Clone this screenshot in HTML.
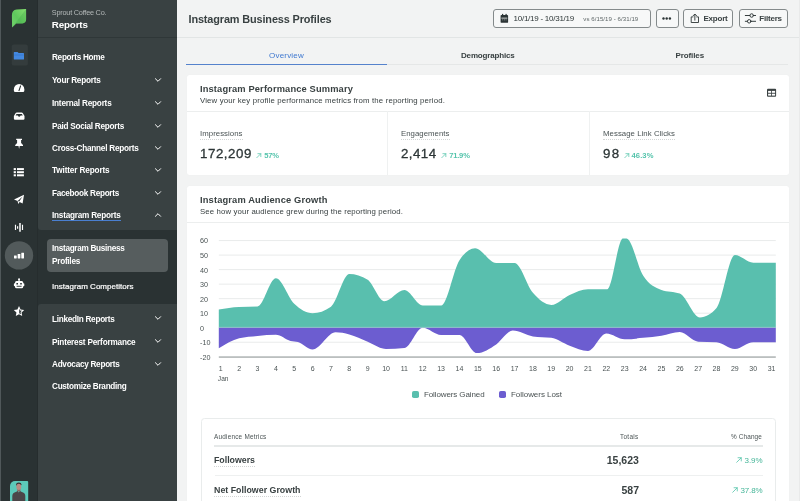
<!DOCTYPE html>
<html lang="en"><head><meta charset="utf-8"><title>Instagram Business Profiles</title>
<style>
html,body{margin:0;padding:0;}
body{width:800px;height:501px;overflow:hidden;background:#f2f3f3;position:relative;font-family:"Liberation Sans",sans-serif;}
.abs{position:absolute;}
.t{position:absolute;white-space:nowrap;margin:0;padding:0;font-weight:400;text-decoration:none;display:block;}
.layer{position:absolute;left:0;top:0;width:800px;height:501px;will-change:transform;}
.btn{position:absolute;box-sizing:border-box;border:1px solid #848a8b;border-radius:3px;background:#f7f8f8;top:9px;height:18.5px;}
.card{position:absolute;background:#fff;border-radius:2.5px;box-shadow:0 0 1px rgba(39,51,51,.06);}
.dot{position:absolute;height:0;border-top:1px dotted #d2d5d5;}
</style></head><body>
<aside id="rail" class="layer">
<div class="abs" style="left:0;top:0;width:38px;height:501px;background:#2a3233"></div>
<div class="abs" style="left:0;top:0;width:1.3px;height:501px;background:#50585a"></div>
<div class="abs" style="left:36.8px;top:0;width:1.2px;height:501px;background:#262d2e"></div>
<svg class="abs" style="left:0;top:0" width="38" height="501" viewBox="0 0 38 501">
  <defs>
    <linearGradient id="lg" x1="0" y1="1" x2="1" y2="0">
      <stop offset="0" stop-color="#74d36e"/>
      <stop offset="0.45" stop-color="#5fc85d"/>
      <stop offset="1" stop-color="#86e070"/>
    </linearGradient>
  </defs>
  <!-- logo leaf -->
  <path d="M12.1,27.5 L11.9,15.4 C11.9,11.6 13.4,9.6 16.6,9.4 L26.1,8.9 L26.1,19.6 C26.1,22 24.8,23.4 22.4,23.5 L16.2,23.6 Z" fill="url(#lg)"/>
  <path d="M12.1,27.5 L26.1,8.9 L26.1,19.6 C26.1,22 24.8,23.4 22.4,23.5 L16.2,23.6 Z" fill="#3fa648" opacity="0.3"/>
  <!-- folder button -->
  <rect x="11.7" y="44.4" width="16.2" height="21.2" rx="2.2" fill="#343c3d"/>
  <path d="M13.8,52.6 a0.6,0.6 0 0 1 0.6,-0.6 h3.2 l1,1.1 h4.8 a0.6,0.6 0 0 1 0.6,0.6 v5.2 a0.6,0.6 0 0 1 -0.6,0.6 h-9 a0.6,0.6 0 0 1 -0.6,-0.6 Z" fill="#4489e0"/>
  <rect x="14.2" y="54.6" width="9.4" height="0.8" fill="#2f6fc8" opacity="0.7"/>
  <!-- gauge -->
  <path d="M15.2,92.1 a1.3,1.3 0 0 1 -1.3,-1.3 v-1.6 a5.2,5.2 0 0 1 10.4,0 v1.6 a1.3,1.3 0 0 1 -1.3,1.3 Z" fill="#fff"/>
  <path d="M20.6,85.9 L19,90.6" stroke="#2a3233" stroke-width="1.1" stroke-linecap="round" fill="none"/>
  <!-- inbox -->
  <path d="M15,119.8 a1.1,1.1 0 0 1 -1.1,-1.1 v-2.6 l1.8,-3.1 q0.4,-0.6 1.1,-0.6 h4.8 q0.7,0 1.1,0.6 l1.8,3.1 v2.6 a1.1,1.1 0 0 1 -1.1,1.1 Z" fill="#fff"/>
  <path d="M15.6,115.5 l0.9,-1.5 h5.4 l0.9,1.5 h-2.2 q-0.6,1.3 -1.4,1.3 q-0.8,0 -1.4,-1.3 Z" fill="#2a3233"/>
  <!-- pin -->
  <path d="M16.2,138.7 h5.8 v1.4 h-0.9 v3 l1.9,1.9 v1 h-3.3 l-0.6,3 l-0.6,-3 h-3.3 v-1 l1.9,-1.9 v-3 h-0.9 Z" fill="#fff"/>
  <!-- list -->
  <g fill="#fff">
    <rect x="13.7" y="168.1" width="2.2" height="2"/><rect x="17" y="168.1" width="6.9" height="2"/>
    <rect x="13.7" y="171.2" width="2.2" height="2"/><rect x="17" y="171.2" width="6.9" height="2"/>
    <rect x="13.7" y="174.3" width="2.2" height="2"/><rect x="17" y="174.3" width="6.9" height="2"/>
  </g>
  <!-- paper plane -->
  <path d="M14,199.6 L24,194.8 L22.6,203.4 L19.6,202 L18.2,203.9 L17.6,201.1 Z" fill="#fff"/>
  <path d="M17.7,201 L22.6,196.6 L19.2,201.6" fill="#2a3233"/>
  <!-- audio bars -->
  <g stroke="#fff" stroke-width="1.15" stroke-linecap="butt" fill="none">
    <path d="M15.5,224.8 v5.3 M17.6,226.2 v2.6 M22.5,224.8 v5.3"/><path d="M20,223.1 v8.7" stroke-width="1.5"/>
  </g>
  <!-- selected circle + bars -->
  <circle cx="19" cy="255.4" r="14.2" fill="#525a5b"/>
  <g fill="#fff">
    <rect x="14" y="255.4" width="2.7" height="3" rx="0.4"/>
    <rect x="17.65" y="254" width="2.7" height="4.4" rx="0.4"/>
    <rect x="21.3" y="252.7" width="2.7" height="5.7" rx="0.4"/>
  </g>
  <!-- robot -->
  <rect x="18.4" y="278.9" width="1.3" height="2.6" fill="#fff"/>
  <circle cx="19.05" cy="279.2" r="0.9" fill="#fff"/>
  <rect x="15" y="281.1" width="8.2" height="7.1" rx="1.5" fill="#fff"/>
  <rect x="13.9" y="283.2" width="10.4" height="3" rx="0.8" fill="#fff"/>
  <rect x="16.4" y="283" width="1.6" height="1.5" fill="#2a3233"/>
  <rect x="20.2" y="283" width="1.6" height="1.5" fill="#2a3233"/>
  <rect x="16.6" y="285.8" width="5" height="0.9" fill="#2a3233"/>
  <!-- star -->
  <path d="M19,306.1 L20.6,309.5 L24.2,309.95 L21.55,312.45 L22.2,316.1 L19,314.3 L15.8,316.1 L16.45,312.45 L13.8,309.95 L17.4,309.5 Z" fill="#fff"/>
  <path d="M19.2,308.6 L19.2,313.2 L20.9,314.2 L20.55,312.1 L22,310.75 L20.05,310.45 Z" fill="#2a3233"/>
  <!-- avatar -->
  <path d="M10,501 V486 a5,5 0 0 1 5,-5 H27.2 a1,1 0 0 1 1,1 V501 Z" fill="#5cc9b9"/>
  <ellipse cx="18.8" cy="484.4" rx="2.7" ry="1.9" fill="#3a3234"/>
  <ellipse cx="18.8" cy="486.9" rx="2.45" ry="3.1" fill="#b88c83"/>
  <path d="M17.2,489.2 q1.6,1.6 3.2,0 v2.2 h-3.2 Z" fill="#8f6a64"/>
  <path d="M12.3,501 V496 q0,-3.2 4,-4.3 l1.3,-0.6 l1.2,1.4 l1.2,-1.4 l1.3,0.6 q4,1.1 4,4.3 V501 Z" fill="#4b4648"/>
</svg>
</aside>
<nav id="sidenav" class="layer">
<div class="abs" style="left:38px;top:0;width:139px;height:501px;background:#2a3233"></div>
<div class="abs" style="left:38px;top:0;width:139px;height:229.5px;background:#394142;border-radius:0 0 0 3px"></div>
<div class="abs" style="left:38px;top:303.8px;width:139px;height:198px;background:#394142;border-radius:3px 0 0 0"></div>
<div class="abs" style="left:38px;top:37px;width:139px;height:1px;background:#2f3738"></div>
<div class="abs" style="left:47px;top:239.1px;width:120.6px;height:32.7px;background:#565d5e;border-radius:4px"></div>
<div class="abs" style="left:52px;top:220.2px;width:68.5px;height:1px;background:#4a7fd0"></div>
<svg class="abs" style="left:152px;top:74.6px" width="12" height="10" viewBox="-6 -5 12 10"><path d="M-2.6,-1.3L0,1.3L2.6,-1.3" fill="none" stroke="#fff" stroke-width="1.0" stroke-linecap="round" stroke-linejoin="round"/></svg>
<svg class="abs" style="left:152px;top:97.6px" width="12" height="10" viewBox="-6 -5 12 10"><path d="M-2.6,-1.3L0,1.3L2.6,-1.3" fill="none" stroke="#fff" stroke-width="1.0" stroke-linecap="round" stroke-linejoin="round"/></svg>
<svg class="abs" style="left:152px;top:120.6px" width="12" height="10" viewBox="-6 -5 12 10"><path d="M-2.6,-1.3L0,1.3L2.6,-1.3" fill="none" stroke="#fff" stroke-width="1.0" stroke-linecap="round" stroke-linejoin="round"/></svg>
<svg class="abs" style="left:152px;top:143px" width="12" height="10" viewBox="-6 -5 12 10"><path d="M-2.6,-1.3L0,1.3L2.6,-1.3" fill="none" stroke="#fff" stroke-width="1.0" stroke-linecap="round" stroke-linejoin="round"/></svg>
<svg class="abs" style="left:152px;top:165.1px" width="12" height="10" viewBox="-6 -5 12 10"><path d="M-2.6,-1.3L0,1.3L2.6,-1.3" fill="none" stroke="#fff" stroke-width="1.0" stroke-linecap="round" stroke-linejoin="round"/></svg>
<svg class="abs" style="left:152px;top:187.6px" width="12" height="10" viewBox="-6 -5 12 10"><path d="M-2.6,-1.3L0,1.3L2.6,-1.3" fill="none" stroke="#fff" stroke-width="1.0" stroke-linecap="round" stroke-linejoin="round"/></svg>
<svg class="abs" style="left:152px;top:209.8px" width="12" height="10" viewBox="-6 -5 12 10"><path d="M-2.6,1.3L0,-1.3L2.6,1.3" fill="none" stroke="#fff" stroke-width="1.0" stroke-linecap="round" stroke-linejoin="round"/></svg>
<svg class="abs" style="left:152px;top:313.3px" width="12" height="10" viewBox="-6 -5 12 10"><path d="M-2.6,-1.3L0,1.3L2.6,-1.3" fill="none" stroke="#fff" stroke-width="1.0" stroke-linecap="round" stroke-linejoin="round"/></svg>
<svg class="abs" style="left:152px;top:336px" width="12" height="10" viewBox="-6 -5 12 10"><path d="M-2.6,-1.3L0,1.3L2.6,-1.3" fill="none" stroke="#fff" stroke-width="1.0" stroke-linecap="round" stroke-linejoin="round"/></svg>
<svg class="abs" style="left:152px;top:358.6px" width="12" height="10" viewBox="-6 -5 12 10"><path d="M-2.6,-1.3L0,1.3L2.6,-1.3" fill="none" stroke="#fff" stroke-width="1.0" stroke-linecap="round" stroke-linejoin="round"/></svg>
<span class="t" id="co" style="left:51.8px;top:7px;font-size:7.3px;line-height:11px;color:#b4b9b9;letter-spacing:-0.222px;">Sprout Coffee Co.</span>
<span class="t" id="rep" style="left:51.8px;top:18px;font-size:9.8px;line-height:14px;color:#ffffff;font-weight:700;letter-spacing:-0.147px;">Reports</span>
<a class="t" id="nav0" style="left:52px;top:52px;font-size:8.2px;line-height:12px;color:#ffffff;font-weight:700;letter-spacing:-0.289px;">Reports Home</a>
<a class="t" id="nav1" style="left:52px;top:75px;font-size:8.2px;line-height:12px;color:#ffffff;font-weight:700;letter-spacing:-0.23px;">Your Reports</a>
<a class="t" id="nav2" style="left:52px;top:98px;font-size:8.2px;line-height:12px;color:#ffffff;font-weight:700;letter-spacing:-0.206px;">Internal Reports</a>
<a class="t" id="nav3" style="left:52px;top:121px;font-size:8.2px;line-height:12px;color:#ffffff;font-weight:700;letter-spacing:-0.258px;">Paid Social Reports</a>
<a class="t" id="nav4" style="left:52px;top:143px;font-size:8.2px;line-height:12px;color:#ffffff;font-weight:700;letter-spacing:-0.236px;">Cross-Channel Reports</a>
<a class="t" id="nav5" style="left:52px;top:165px;font-size:8.2px;line-height:12px;color:#ffffff;font-weight:700;letter-spacing:-0.13px;">Twitter Reports</a>
<a class="t" id="nav6" style="left:52px;top:188px;font-size:8.2px;line-height:12px;color:#ffffff;font-weight:700;letter-spacing:-0.277px;">Facebook Reports</a>
<a class="t" id="nav7" style="left:52px;top:210px;font-size:8.2px;line-height:12px;color:#ffffff;font-weight:700;letter-spacing:-0.226px;">Instagram Reports</a>
<a class="t" id="nav8" style="left:52px;top:243px;font-size:8.2px;line-height:12px;color:#ffffff;font-weight:700;letter-spacing:-0.295px;">Instagram Business</a>
<a class="t" id="nav9" style="left:52px;top:256px;font-size:8.2px;line-height:12px;color:#ffffff;font-weight:700;letter-spacing:-0.256px;">Profiles</a>
<a class="t" id="nav10" style="left:52px;top:314px;font-size:8.2px;line-height:12px;color:#ffffff;font-weight:700;letter-spacing:-0.273px;">LinkedIn Reports</a>
<a class="t" id="nav11" style="left:52px;top:337px;font-size:8.2px;line-height:12px;color:#ffffff;font-weight:700;letter-spacing:-0.185px;">Pinterest Performance</a>
<a class="t" id="nav12" style="left:52px;top:359px;font-size:8.2px;line-height:12px;color:#ffffff;font-weight:700;letter-spacing:-0.275px;">Advocacy Reports</a>
<a class="t" id="nav13" style="left:52px;top:381px;font-size:8.2px;line-height:12px;color:#ffffff;font-weight:700;letter-spacing:-0.284px;">Customize Branding</a>
<a class="t" id="navc" style="left:52px;top:281px;font-size:8.0px;line-height:12px;color:#ffffff;letter-spacing:0.028px;-webkit-text-stroke:0.2px #fff;">Instagram Competitors</a>
</nav>
<header id="topbar" class="layer">
<div class="abs" style="left:177px;top:37px;width:623px;height:1px;background:#e2e5e5"></div>
<div class="abs" style="left:799px;top:0;width:1px;height:501px;background:#e9eaea"></div>
<div class="btn" style="left:493.3px;width:157.6px"></div>
<div class="btn" style="left:655.5px;width:23px"></div>
<div class="btn" style="left:683.2px;width:49.5px"></div>
<div class="btn" style="left:739px;width:48.6px"></div>
<svg class="abs" style="left:490px;top:5px" width="310" height="28" viewBox="490 5 310 28">
  <!-- calendar -->
  <rect x="500.6" y="14.9" width="7.5" height="7.9" rx="0.9" fill="#2c3536"/>
  <rect x="502" y="13.9" width="1.2" height="2.2" fill="#2c3536"/>
  <rect x="505.5" y="13.9" width="1.2" height="2.2" fill="#2c3536"/>
  <rect x="501.4" y="17.7" width="5.9" height="0.8" fill="#f7f8f8"/>
  <g fill="#f7f8f8" opacity="0.55"><rect x="502.2" y="19.4" width="1" height="0.9"/><rect x="503.9" y="19.4" width="1" height="0.9"/><rect x="505.6" y="19.4" width="1" height="0.9"/></g>
  <!-- dots -->
  <circle cx="663.5" cy="18.5" r="1.2" fill="#2c3536"/>
  <circle cx="666.7" cy="18.5" r="1.2" fill="#2c3536"/>
  <circle cx="669.9" cy="18.5" r="1.2" fill="#2c3536"/>
  <!-- export/share -->
  <path d="M693,16.9 h-1.8 v5.6 h7.3 v-5.6 h-1.8 M694.85,20.2 v-5.8 M693.1,15.8 l1.75,-1.8 l1.75,1.8" fill="none" stroke="#2c3536" stroke-width="0.9" stroke-linejoin="round" stroke-linecap="round"/>
  <!-- filters sliders -->
  <g fill="none" stroke="#2c3536" stroke-width="0.95" stroke-linecap="round">
    <path d="M745.3,15.5 h4.5 M753.6,15.5 h2"/>
    <circle cx="751.7" cy="15.5" r="1.75"/>
    <path d="M745.3,21.3 h2 M751.1,21.3 h4.5"/>
    <circle cx="749.2" cy="21.3" r="1.75"/>
  </g>
</svg>
<h1 class="t" id="title" style="left:188.5px;top:12px;font-size:10.9px;line-height:15px;color:#394142;font-weight:700;letter-spacing:-0.129px;">Instagram Business Profiles</h1>
<span class="t" id="date" style="left:513.5px;top:13px;font-size:8.0px;line-height:12px;color:#2c3536;letter-spacing:-0.247px;">10/1/19 - 10/31/19</span>
<span class="t" id="vs" style="left:583.3px;top:14px;font-size:6.1px;line-height:9px;color:#5f6768;letter-spacing:0.056px;">vs 6/15/19 - 6/31/19</span>
<span class="t" id="export" style="left:703.5px;top:13px;font-size:8.0px;line-height:12px;color:#394142;font-weight:700;letter-spacing:-0.224px;">Export</span>
<span class="t" id="filters" style="left:759.3px;top:13px;font-size:8.0px;line-height:12px;color:#394142;font-weight:700;letter-spacing:-0.217px;">Filters</span>
</header>
<main id="content" class="layer">
<div id="tabs">
<div class="abs" style="left:387px;top:64.1px;width:401px;height:1px;background:#e5e7e7"></div>
<div class="abs" style="left:186px;top:63.5px;width:201px;height:1.4px;background:#5582cc"></div>
<span class="t" id="tab1" style="left:269px;top:50px;font-size:8.0px;line-height:12px;color:#3f78d0;letter-spacing:0.207px;">Overview</span>
<span class="t" id="tab2" style="left:461px;top:50px;font-size:8.0px;line-height:12px;color:#394142;font-weight:700;letter-spacing:-0.173px;">Demographics</span>
<span class="t" id="tab3" style="left:675.5px;top:50px;font-size:8.0px;line-height:12px;color:#394142;font-weight:700;letter-spacing:-0.105px;">Profiles</span>
</div>
<section id="summary">
<div class="card" style="left:186.8px;top:74.5px;width:602px;height:100.5px"></div>
<div class="abs" style="left:187px;top:110.8px;width:601.7px;height:1px;background:#eceeee"></div>
<div class="abs" style="left:387px;top:111px;width:1px;height:64px;background:#eff1f1"></div>
<div class="abs" style="left:588.5px;top:111px;width:1px;height:64px;background:#eff1f1"></div>
<svg class="abs" style="left:764px;top:86px" width="16" height="14" viewBox="764 86 16 14">
  <rect x="767" y="88.8" width="9.1" height="8" rx="1" fill="#3a4142"/>
  <rect x="768.1" y="90.9" width="3.1" height="1.9" fill="#fff"/>
  <rect x="772" y="90.9" width="3.1" height="1.9" fill="#fff"/>
  <rect x="768.1" y="93.7" width="3.1" height="1.9" fill="#fff"/>
  <rect x="772" y="93.7" width="3.1" height="1.9" fill="#fff"/>
</svg>
<div class="dot" style="left:200px;top:139.2px;width:42.5px"></div>
<div class="dot" style="left:401px;top:139.2px;width:48.5px"></div>
<div class="dot" style="left:603px;top:139.2px;width:72px"></div>
<svg class="abs" style="left:256.3px;top:152.7px" width="5.5" height="5.5" viewBox="0 0 10 10"><path d="M1.2,8.8L8.6,1.4M3.4,1.2H8.8V6.6" fill="none" stroke="#4fc3a8" stroke-width="1.3" stroke-linecap="round" stroke-linejoin="round"/></svg>
<svg class="abs" style="left:441.3px;top:152.7px" width="5.5" height="5.5" viewBox="0 0 10 10"><path d="M1.2,8.8L8.6,1.4M3.4,1.2H8.8V6.6" fill="none" stroke="#4fc3a8" stroke-width="1.3" stroke-linecap="round" stroke-linejoin="round"/></svg>
<svg class="abs" style="left:624px;top:152.7px" width="5.5" height="5.5" viewBox="0 0 10 10"><path d="M1.2,8.8L8.6,1.4M3.4,1.2H8.8V6.6" fill="none" stroke="#4fc3a8" stroke-width="1.3" stroke-linecap="round" stroke-linejoin="round"/></svg>
<h2 class="t" id="c1t" style="left:200px;top:83px;font-size:9.3px;line-height:13px;color:#394142;font-weight:700;letter-spacing:0.144px;">Instagram Performance Summary</h2>
<span class="t" id="c1s" style="left:200px;top:95px;font-size:7.8px;line-height:11px;color:#394142;letter-spacing:0.151px;">View your key profile performance metrics from the reporting period.</span>
<span class="t" id="m1l" style="left:200px;top:128px;font-size:7.8px;line-height:11px;color:#4a5354;letter-spacing:0.043px;">Impressions</span>
<span class="t" id="m1v" style="left:200px;top:145px;font-size:13.3px;line-height:18px;color:#2c3536;letter-spacing:0.56px;-webkit-text-stroke:0.3px #2c3536;">172,209</span>
<span class="t" id="m1c" style="left:264.2px;top:150px;font-size:7.6px;line-height:11px;color:#55c4ac;font-weight:700;letter-spacing:-0.234px;">57%</span>
<span class="t" id="m2l" style="left:401px;top:128px;font-size:7.8px;line-height:11px;color:#4a5354;letter-spacing:0.034px;">Engagements</span>
<span class="t" id="m2v" style="left:401px;top:145px;font-size:13.3px;line-height:18px;color:#2c3536;letter-spacing:0.444px;-webkit-text-stroke:0.3px #2c3536;">2,414</span>
<span class="t" id="m2c" style="left:449.2px;top:150px;font-size:7.6px;line-height:11px;color:#55c4ac;font-weight:700;letter-spacing:-0.209px;">71.9%</span>
<span class="t" id="m3l" style="left:603px;top:128px;font-size:7.8px;line-height:11px;color:#4a5354;letter-spacing:0.049px;">Message Link Clicks</span>
<span class="t" id="m3v" style="left:603px;top:145px;font-size:13.3px;line-height:18px;color:#2c3536;letter-spacing:1.352px;-webkit-text-stroke:0.3px #2c3536;">98</span>
<span class="t" id="m3c" style="left:631.5px;top:150px;font-size:7.6px;line-height:11px;color:#55c4ac;font-weight:700;letter-spacing:0.091px;">46.3%</span>
</section>
<section id="growth">
<div class="card" style="left:186.8px;top:186.3px;width:602px;height:330px"></div>
<div class="abs" style="left:187px;top:222px;width:601.7px;height:1px;background:#eceeee"></div>
<h2 class="t" id="c2t" style="left:200px;top:194px;font-size:9.3px;line-height:13px;color:#394142;font-weight:700;letter-spacing:0.154px;">Instagram Audience Growth</h2>
<span class="t" id="c2s" style="left:200px;top:206px;font-size:7.8px;line-height:11px;color:#394142;letter-spacing:0.121px;">See how your audience grew during the reporting period.</span>
<div id="chart">
<svg class="abs" style="left:0;top:0" width="800" height="501" viewBox="0 0 800 501">
<rect x="218.8" y="240.08" width="557.0" height="1" fill="#e9ebeb"/>
<rect x="218.8" y="254.60" width="557.0" height="1" fill="#e9ebeb"/>
<rect x="218.8" y="269.12" width="557.0" height="1" fill="#e9ebeb"/>
<rect x="218.8" y="283.64" width="557.0" height="1" fill="#e9ebeb"/>
<rect x="218.8" y="298.16" width="557.0" height="1" fill="#e9ebeb"/>
<rect x="218.8" y="312.68" width="557.0" height="1" fill="#e9ebeb"/>
<rect x="218.8" y="327.20" width="557.0" height="1" fill="#e9ebeb"/>
<rect x="218.8" y="341.72" width="557.0" height="1" fill="#e9ebeb"/>
<path d="M218.8,327.7L218.80,309.40C225.59,308.33 232.37,307.26 239.16,306.94C245.28,306.65 251.40,306.79 257.52,306.50C263.64,306.21 269.76,278.33 275.88,278.33C282.00,278.33 288.12,297.93 294.24,303.74C300.36,309.55 306.48,313.18 312.60,313.18C318.72,313.18 324.84,311.00 330.96,306.65C337.08,302.29 343.20,273.98 349.32,273.98C355.44,273.98 361.56,275.91 367.68,279.78C373.19,283.27 378.70,301.13 384.20,301.13C390.94,301.13 397.67,289.95 404.40,289.95C410.52,289.95 416.64,305.48 422.76,305.48C428.88,305.48 435.00,305.48 441.12,305.48C447.24,305.48 453.36,269.63 459.48,260.18C464.68,252.15 469.88,248.13 475.09,248.13C482.12,248.13 489.16,263.09 496.20,263.09C502.32,263.09 508.44,263.09 514.56,263.09C520.68,263.09 526.80,285.88 532.92,292.85C539.04,299.82 545.16,304.90 551.28,304.90C557.40,304.90 563.52,297.50 569.64,294.88C575.76,292.27 581.88,289.22 588.00,289.22C594.43,289.22 600.85,289.22 607.28,289.22C612.48,289.22 617.68,238.40 622.88,238.40C624.11,238.40 625.33,238.40 626.56,238.40C632.06,238.40 637.57,266.87 643.08,275.43C649.20,284.94 655.32,287.53 661.44,289.95C667.56,292.37 673.68,291.16 679.80,293.58C686.53,296.24 693.26,317.54 700.00,317.54C705.50,317.54 711.01,314.39 716.52,308.10C722.64,301.11 728.76,255.10 734.88,255.10C741.00,255.10 747.12,262.80 753.24,262.80C760.76,262.80 768.28,262.80 775.80,262.80L775.8,327.7Z" fill="#59bfae"/>
<path d="M218.8,327.7L218.80,348.32C225.59,344.17 232.37,340.02 239.16,338.30C245.28,336.75 251.40,336.56 257.52,335.98C263.64,335.40 269.76,334.81 275.88,334.81C280.78,334.81 285.67,339.72 290.57,340.91C293.02,341.51 295.46,341.41 297.91,342.07C302.81,343.41 307.70,349.48 312.60,349.48C320.25,349.48 327.90,332.35 335.55,332.35C340.14,332.35 344.73,333.21 349.32,334.38C355.44,335.93 361.56,339.22 367.68,341.64C373.80,344.06 379.92,348.90 386.04,348.90C392.16,348.90 398.28,348.61 404.40,348.03C410.52,347.45 416.64,327.70 422.76,327.70C428.88,327.70 435.00,334.96 441.12,334.96C447.24,334.96 453.36,334.96 459.48,334.96C465.29,334.96 471.11,353.11 476.92,353.11C483.35,353.11 489.77,348.63 496.20,344.40C501.71,340.77 507.22,330.60 512.72,330.60C519.46,330.60 526.19,335.35 532.92,336.41C539.04,337.38 545.16,336.90 551.28,337.86C557.40,338.83 563.52,343.53 569.64,345.70C575.76,347.88 581.88,350.93 588.00,350.93C594.12,350.93 600.24,333.51 606.36,333.51C612.48,333.51 618.60,339.32 624.72,339.32C630.84,339.32 636.96,338.47 643.08,337.86C649.20,337.26 655.32,336.65 661.44,335.69C667.56,334.72 673.68,332.06 679.80,332.06C685.92,332.06 692.04,341.25 698.16,341.64C704.28,342.03 710.40,341.83 716.52,342.22C722.64,342.61 728.76,348.90 734.88,348.90C741.00,348.90 747.12,342.22 753.24,342.22C760.76,342.22 768.28,342.22 775.80,342.22L775.8,327.7Z" fill="#6c5dd0"/>
<rect x="218.8" y="326.80" width="557.0" height="0.9" fill="#ffffff" opacity="0.22"/>
<rect x="218.8" y="356.19" width="557.0" height="1.8" fill="#bbbfbf"/>
</svg>
<span class="t" id="y60" style="left:200px;top:235px;font-size:7.2px;line-height:11px;color:#4a5354;">60</span>
<span class="t" id="y50" style="left:200px;top:250px;font-size:7.2px;line-height:11px;color:#4a5354;">50</span>
<span class="t" id="y40" style="left:200px;top:265px;font-size:7.2px;line-height:11px;color:#4a5354;">40</span>
<span class="t" id="y30" style="left:200px;top:279px;font-size:7.2px;line-height:11px;color:#4a5354;">30</span>
<span class="t" id="y20" style="left:200px;top:294px;font-size:7.2px;line-height:11px;color:#4a5354;">20</span>
<span class="t" id="y10" style="left:200px;top:308px;font-size:7.2px;line-height:11px;color:#4a5354;">10</span>
<span class="t" id="y0" style="left:200px;top:323px;font-size:7.2px;line-height:11px;color:#4a5354;">0</span>
<span class="t" id="y-10" style="left:200px;top:337px;font-size:7.2px;line-height:11px;color:#4a5354;">-10</span>
<span class="t" id="y-20" style="left:200px;top:352px;font-size:7.2px;line-height:11px;color:#4a5354;">-20</span>
<span class="t" id="x1" style="left:220.8px;top:364px;font-size:7.0px;line-height:10px;color:#4a5354;transform:translateX(-50%);">1</span>
<span class="t" id="x2" style="left:239.16px;top:364px;font-size:7.0px;line-height:10px;color:#4a5354;transform:translateX(-50%);">2</span>
<span class="t" id="x3" style="left:257.52px;top:364px;font-size:7.0px;line-height:10px;color:#4a5354;transform:translateX(-50%);">3</span>
<span class="t" id="x4" style="left:275.88px;top:364px;font-size:7.0px;line-height:10px;color:#4a5354;transform:translateX(-50%);">4</span>
<span class="t" id="x5" style="left:294.24px;top:364px;font-size:7.0px;line-height:10px;color:#4a5354;transform:translateX(-50%);">5</span>
<span class="t" id="x6" style="left:312.6px;top:364px;font-size:7.0px;line-height:10px;color:#4a5354;transform:translateX(-50%);">6</span>
<span class="t" id="x7" style="left:330.96px;top:364px;font-size:7.0px;line-height:10px;color:#4a5354;transform:translateX(-50%);">7</span>
<span class="t" id="x8" style="left:349.32px;top:364px;font-size:7.0px;line-height:10px;color:#4a5354;transform:translateX(-50%);">8</span>
<span class="t" id="x9" style="left:367.68px;top:364px;font-size:7.0px;line-height:10px;color:#4a5354;transform:translateX(-50%);">9</span>
<span class="t" id="x10" style="left:386.04px;top:364px;font-size:7.0px;line-height:10px;color:#4a5354;transform:translateX(-50%);">10</span>
<span class="t" id="x11" style="left:404.4px;top:364px;font-size:7.0px;line-height:10px;color:#4a5354;transform:translateX(-50%);">11</span>
<span class="t" id="x12" style="left:422.76px;top:364px;font-size:7.0px;line-height:10px;color:#4a5354;transform:translateX(-50%);">12</span>
<span class="t" id="x13" style="left:441.12px;top:364px;font-size:7.0px;line-height:10px;color:#4a5354;transform:translateX(-50%);">13</span>
<span class="t" id="x14" style="left:459.48px;top:364px;font-size:7.0px;line-height:10px;color:#4a5354;transform:translateX(-50%);">14</span>
<span class="t" id="x15" style="left:477.84px;top:364px;font-size:7.0px;line-height:10px;color:#4a5354;transform:translateX(-50%);">15</span>
<span class="t" id="x16" style="left:496.2px;top:364px;font-size:7.0px;line-height:10px;color:#4a5354;transform:translateX(-50%);">16</span>
<span class="t" id="x17" style="left:514.56px;top:364px;font-size:7.0px;line-height:10px;color:#4a5354;transform:translateX(-50%);">17</span>
<span class="t" id="x18" style="left:532.92px;top:364px;font-size:7.0px;line-height:10px;color:#4a5354;transform:translateX(-50%);">18</span>
<span class="t" id="x19" style="left:551.28px;top:364px;font-size:7.0px;line-height:10px;color:#4a5354;transform:translateX(-50%);">19</span>
<span class="t" id="x20" style="left:569.64px;top:364px;font-size:7.0px;line-height:10px;color:#4a5354;transform:translateX(-50%);">20</span>
<span class="t" id="x21" style="left:588.0px;top:364px;font-size:7.0px;line-height:10px;color:#4a5354;transform:translateX(-50%);">21</span>
<span class="t" id="x22" style="left:606.36px;top:364px;font-size:7.0px;line-height:10px;color:#4a5354;transform:translateX(-50%);">22</span>
<span class="t" id="x23" style="left:624.72px;top:364px;font-size:7.0px;line-height:10px;color:#4a5354;transform:translateX(-50%);">23</span>
<span class="t" id="x24" style="left:643.08px;top:364px;font-size:7.0px;line-height:10px;color:#4a5354;transform:translateX(-50%);">24</span>
<span class="t" id="x25" style="left:661.44px;top:364px;font-size:7.0px;line-height:10px;color:#4a5354;transform:translateX(-50%);">25</span>
<span class="t" id="x26" style="left:679.8px;top:364px;font-size:7.0px;line-height:10px;color:#4a5354;transform:translateX(-50%);">26</span>
<span class="t" id="x27" style="left:698.16px;top:364px;font-size:7.0px;line-height:10px;color:#4a5354;transform:translateX(-50%);">27</span>
<span class="t" id="x28" style="left:716.52px;top:364px;font-size:7.0px;line-height:10px;color:#4a5354;transform:translateX(-50%);">28</span>
<span class="t" id="x29" style="left:734.88px;top:364px;font-size:7.0px;line-height:10px;color:#4a5354;transform:translateX(-50%);">29</span>
<span class="t" id="x30" style="left:753.24px;top:364px;font-size:7.0px;line-height:10px;color:#4a5354;transform:translateX(-50%);">30</span>
<span class="t" id="x31" style="left:771.6px;top:364px;font-size:7.0px;line-height:10px;color:#4a5354;transform:translateX(-50%);">31</span>
<span class="t" id="jan" style="left:217.8px;top:374px;font-size:6.6px;line-height:10px;color:#4a5354;letter-spacing:0.053px;">Jan</span>
<div class="abs" style="left:412.2px;top:391.4px;width:6.8px;height:6.8px;border-radius:1.8px;background:#59bfae"></div>
<div class="abs" style="left:499.2px;top:391.4px;width:6.8px;height:6.8px;border-radius:1.8px;background:#6c5dd0"></div>
<span class="t" id="lg1" style="left:424px;top:389px;font-size:8px;line-height:12px;color:#4a5253;letter-spacing:-0.109px;">Followers Gained</span>
<span class="t" id="lg2" style="left:511px;top:389px;font-size:8px;line-height:12px;color:#4a5253;letter-spacing:-0.041px;">Followers Lost</span>
</div>
<div id="metrics">
<div class="abs" style="left:201px;top:418.3px;width:575px;height:100px;box-sizing:border-box;border:1px solid #e9ecec;border-radius:3.5px;background:#fff"></div>
<div class="abs" style="left:214px;top:445.4px;width:548.5px;height:1.5px;background:#e6e9e9"></div>
<div class="abs" style="left:215px;top:475.1px;width:547.5px;height:1px;background:#eef0f0"></div>
<div class="dot" style="left:214px;top:465.5px;width:41px"></div>
<div class="dot" style="left:214px;top:495.5px;width:86.5px"></div>
<svg class="abs" style="left:736.3px;top:456.6px" width="6.0" height="6.0" viewBox="0 0 10 10"><path d="M1.2,8.8L8.6,1.4M3.4,1.2H8.8V6.6" fill="none" stroke="#4fc3a8" stroke-width="1.3" stroke-linecap="round" stroke-linejoin="round"/></svg>
<svg class="abs" style="left:732.3px;top:486.6px" width="6.0" height="6.0" viewBox="0 0 10 10"><path d="M1.2,8.8L8.6,1.4M3.4,1.2H8.8V6.6" fill="none" stroke="#4fc3a8" stroke-width="1.3" stroke-linecap="round" stroke-linejoin="round"/></svg>
<span class="t" id="th1" style="left:214px;top:432px;font-size:6.4px;line-height:10px;color:#4a5354;letter-spacing:0.217px;">Audience Metrics</span>
<span class="t" id="th2" style="left:620px;top:432px;font-size:6.4px;line-height:10px;color:#4a5354;letter-spacing:0.299px;">Totals</span>
<span class="t" id="th3" style="left:731px;top:432px;font-size:6.4px;line-height:10px;color:#4a5354;letter-spacing:0.143px;">% Change</span>
<span class="t" id="r1a" style="left:214px;top:454px;font-size:8.8px;line-height:13px;color:#394142;font-weight:700;letter-spacing:-0.007px;">Followers</span>
<span class="t" id="r1b" style="left:606.8px;top:453px;font-size:10.5px;line-height:15px;color:#394142;font-weight:700;letter-spacing:-0.021px;">15,623</span>
<span class="t" id="r1c" style="left:744.5px;top:455px;font-size:8px;line-height:12px;color:#45b598;letter-spacing:-0.059px;">3.9%</span>
<span class="t" id="r2a" style="left:214px;top:484px;font-size:8.8px;line-height:13px;color:#394142;font-weight:700;letter-spacing:0.025px;">Net Follower Growth</span>
<span class="t" id="r2b" style="left:621.5px;top:483px;font-size:10.5px;line-height:15px;color:#394142;font-weight:700;letter-spacing:-0.01px;">587</span>
<span class="t" id="r2c" style="left:740.5px;top:485px;font-size:8px;line-height:12px;color:#45b598;letter-spacing:-0.138px;">37.8%</span>
</div>
</section>
</main>
</body></html>
